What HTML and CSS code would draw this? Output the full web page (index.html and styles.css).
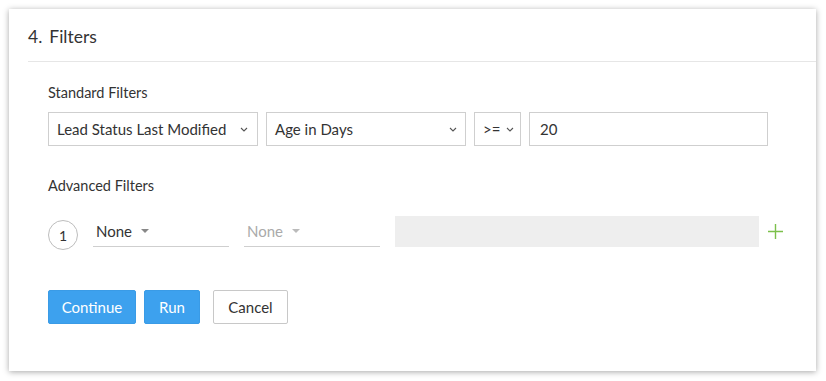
FILE: index.html
```html
<!DOCTYPE html>
<html lang="en">
<head>
  <meta charset="UTF-8">
  <title>Filters</title>
  <link rel="stylesheet" href="styles.css">
</head>
<body>

  <div class="panel">
    <div class="panel-head"><span class="step">4.</span>Filters</div>

    <div class="panel-body">
      <div class="label">Standard Filters</div>
      <div class="std-row">
        <div class="select w-field">
          <span>Lead Status Last Modified</span>
          <svg class="chev" width="8" height="5" viewBox="0 0 8 5"><path d="M1 1l3 3 3-3" fill="none" stroke="#555" stroke-width="1.1"/></svg>
        </div>
        <div class="select w-type">
          <span>Age in Days</span>
          <svg class="chev" width="8" height="5" viewBox="0 0 8 5"><path d="M1 1l3 3 3-3" fill="none" stroke="#555" stroke-width="1.1"/></svg>
        </div>
        <div class="select w-op">
          <span>&gt;=</span>
          <svg class="chev" width="8" height="5" viewBox="0 0 8 5"><path d="M1 1l3 3 3-3" fill="none" stroke="#555" stroke-width="1.1"/></svg>
        </div>
        <div class="input">20</div>
      </div>

      <div class="label adv">Advanced Filters</div>
      <div class="adv-row">
        <div class="num">1</div>
        <div class="line-select">
          <span>None</span>
          <span class="caret"></span>
        </div>
        <div class="line-select muted">
          <span>None</span>
          <span class="caret"></span>
        </div>
        <div class="value-box"></div>
        <svg class="plus" width="15" height="15" viewBox="0 0 15 15"><path d="M7.5 0v15M0 7.5h15" stroke="#7cc04b" stroke-width="1.4"/></svg>
      </div>

      <div class="actions">
        <button class="btn primary">Continue</button>
        <button class="btn primary">Run</button>
        <button class="btn plain">Cancel</button>
      </div>
    </div>
  </div>

</body>
</html>
```

FILE: styles.css
```css
* {
  margin: 0;
  padding: 0;
  box-sizing: border-box;
}

body {
  font-family: Lato, "Open Sans", Arial, sans-serif;
  background: #fff;
  color: #333;
  padding: 9px 10px 10px 9px;
}

.panel {
  width: 807px;
  height: 362px;
  background: #fff;
  box-shadow: 0 1px 6px rgba(0, 0, 0, 0.35);
}

.panel-head {
  margin-left: 19px;
  height: 53px;
  padding-top: 17px;
  font-size: 17.5px;
  color: #333;
  border-bottom: 1px solid #e6e6e6;
}

.step {
  margin-right: 7px;
}

.panel-body {
  padding: 22px 0 0 39px;
}

.label {
  font-size: 14.5px;
  line-height: 18px;
  color: #333;
}

.label.adv {
  margin-top: 31px;
}

.std-row {
  display: flex;
  gap: 8px;
  margin-top: 10px;
}

.select,
.input {
  height: 34px;
  border: 1px solid #cfcfcf;
  font-size: 15px;
  color: #333;
  display: flex;
  align-items: center;
  padding: 0 8px;
}

.select span {
  flex: 1;
}

.chev {
  flex: none;
}

.w-field { width: 210px; padding-right: 9px; }
.w-type { width: 200px; padding-right: 8px; }
.w-op { width: 47px; padding-right: 6px; }
.input { width: 239px; padding-left: 10px; }

.adv-row {
  display: flex;
  align-items: flex-start;
  margin-top: 21px;
  height: 34px;
}

.num {
  width: 30px;
  height: 30px;
  border: 1px solid #bdbdbd;
  border-radius: 50%;
  font-size: 14px;
  display: flex;
  align-items: center;
  justify-content: center;
  margin-top: 4px;
  margin-right: 15px;
}

.line-select {
  width: 136px;
  height: 31px;
  border-bottom: 1px solid #cfcfcf;
  font-size: 15px;
  color: #333;
  display: flex;
  align-items: center;
  padding-left: 3px;
  margin-right: 15px;
}

.line-select.muted {
  color: #aaa;
}

.caret {
  width: 0;
  height: 0;
  border-left: 4.5px solid transparent;
  border-right: 4.5px solid transparent;
  border-top: 4.5px solid #888;
  margin-left: 9px;
}

.line-select.muted .caret {
  border-top-color: #bbb;
}

.value-box {
  width: 364px;
  height: 31px;
  background: #eeeeee;
}

.plus {
  margin-left: 9px;
  margin-top: 8px;
}

.actions {
  display: flex;
  margin-top: 40px;
}

.btn {
  height: 34px;
  font-family: inherit;
  font-size: 15px;
  border-radius: 2px;
  cursor: pointer;
}

.btn.primary {
  background: #3da1ee;
  border: 1px solid #3a9be6;
  color: #fff;
  margin-right: 8px;
}

.btn.primary:first-child { width: 88px; }
.btn.primary:nth-child(2) { width: 56px; margin-right: 13px; }

.btn.plain {
  width: 75px;
  background: #fff;
  border: 1px solid #c8c8c8;
  color: #333;
}
```
